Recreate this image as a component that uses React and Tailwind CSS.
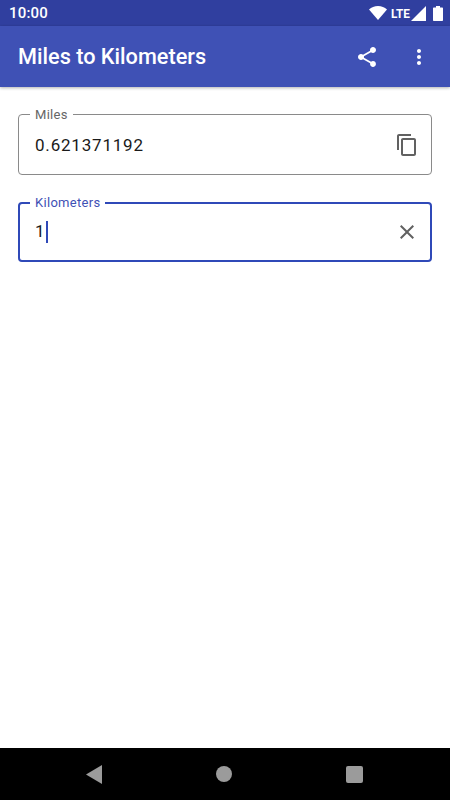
import React from 'react';

function Icon({ d, size = 24, className = '' }) {
  return (
    <svg width={size} height={size} viewBox="0 0 24 24" fill="currentColor" className={className}>
      <path d={d} />
    </svg>
  );
}

const SHARE = 'M18 16.08c-.76 0-1.44.3-1.96.77L8.91 12.7c.05-.23.09-.46.09-.7s-.04-.47-.09-.7l7.05-4.11c.54.5 1.25.81 2.04.81 1.66 0 3-1.34 3-3s-1.34-3-3-3-3 1.34-3 3c0 .24.04.47.09.7L8.04 9.81C7.5 9.31 6.79 9 6 9c-1.66 0-3 1.34-3 3s1.34 3 3 3c.79 0 1.5-.31 2.04-.81l7.12 4.16c-.05.21-.08.43-.08.65 0 1.61 1.31 2.92 2.92 2.92 1.61 0 2.92-1.31 2.92-2.92s-1.31-2.92-2.92-2.92z';
const MORE = 'M12 8c1.1 0 2-.9 2-2s-.9-2-2-2-2 .9-2 2 .9 2 2 2zm0 2c-1.1 0-2 .9-2 2s.9 2 2 2 2-.9 2-2-.9-2-2-2zm0 6c-1.1 0-2 .9-2 2s.9 2 2 2 2-.9 2-2-.9-2-2-2z';
const COPY = 'M16 1H4c-1.1 0-2 .9-2 2v14h2V3h12V1zm3 4H8c-1.1 0-2 .9-2 2v14c0 1.1.9 2 2 2h11c1.1 0 2-.9 2-2V7c0-1.1-.9-2-2-2zm0 16H8V7h11v14z';
const CLOSE = 'M19 6.41L17.59 5 12 10.59 6.41 5 5 6.41 10.59 12 5 17.59 6.41 19 12 13.41 17.59 19 19 17.59 13.41 12 19 6.41z';

function StatusBar() {
  return (
    <div className="h-[26px] bg-[#303f9f] flex items-center justify-between pl-[9px] pr-[7px] text-white">
      <span className="text-[15px] font-medium tracking-[0.2px]">10:00</span>
      <div className="flex items-center">
        <svg width="18" height="14" viewBox="0 0 18 14" fill="currentColor">
          <path d="M9 14L0 3.6C2.4 1.400 5.500 0 9 0s6.600 1.400 9 3.600L9 14z" />
        </svg>
        <span className="ml-[3px] text-[13px] font-bold leading-none scale-x-[0.9]">LTE</span>
        <svg width="15" height="15" viewBox="0 0 15 15" fill="currentColor">
          <path d="M15 0v15H0L15 0z" />
        </svg>
        <svg width="10" height="15" viewBox="0 0 10 15" fill="currentColor" className="ml-[7px]">
          <path d="M3 0h4v1.500h2c.6 0 1 .4 1 1V14c0 .6-.4 1-1 1H1c-.6 0-1-.4-1-1V2.500c0-.6.4-1 1-1h2V0z" />
        </svg>
      </div>
    </div>
  );
}

function Toolbar() {
  return (
    <div className="h-[61px] bg-[#3f51b5] flex items-center pl-[18px] text-white shadow-[0_1px_3px_rgba(0,0,0,0.3)]">
      <h1 className="flex-1 text-[21.7px] font-medium pt-[1px]">Miles to Kilometers</h1>
      <Icon d={SHARE} className="mr-[28px]" />
      <Icon d={MORE} className="mr-[19px]" />
    </div>
  );
}

function Field({ label, active, icon, children }) {
  return (
    <fieldset
      className={
        active
          ? 'h-[66px] rounded-[4px] border-2 border-[#2f49b8] px-[15px]'
          : 'h-[67px] rounded-[4px] border border-[#8a8a8a] px-[16px]'
      }
    >
      <legend
        className={
          active
            ? 'ml-[-5px] px-[5px] text-[13px] leading-[13px] tracking-[0.3px] text-[#3f51b5]'
            : 'ml-[-5px] px-[5px] text-[13px] leading-[13px] tracking-[0.3px] text-[#666666]'
        }
      >
        {label}
      </legend>
      <div className={active ? 'flex items-center justify-between h-[46px]' : 'flex items-center justify-between h-[48px]'}>
        <div className={active ? 'flex items-center text-[17px] tracking-[0.8px] text-[#1a1a1a]' : 'flex items-center pt-[2px] text-[17px] tracking-[0.8px] text-[#1a1a1a]'}>
          {children}
        </div>
        <Icon d={icon} className="text-[#616161] mr-[-4px]" />
      </div>
    </fieldset>
  );
}

function NavBar() {
  return (
    <div className="h-[52px] bg-black flex items-center justify-between pl-[86px] pr-[87px] text-[#9b9b9b]">
      <svg width="16" height="19" viewBox="0 0 16 19" fill="currentColor">
        <path d="M16 0v19L0 9.500z" />
      </svg>
      <div className="w-4 h-4 rounded-full bg-[#9b9b9b]" />
      <div className="w-[17px] h-[17px] rounded-[2px] bg-[#9b9b9b]" />
    </div>
  );
}

export default function App() {
  return (
    <div className="h-[800px] w-[450px] flex flex-col bg-white font-['Roboto',sans-serif] overflow-hidden">
      <StatusBar />
      <Toolbar />
      <div className="flex-1 flex flex-col gap-[21px] px-[18px] pt-[21px]">
        <Field label="Miles" icon={COPY}>0.621371192</Field>
        <Field label="Kilometers" icon={CLOSE} active>
          1<span className="ml-[1px] w-[2px] h-[22px] bg-[#2f49b8]" />
        </Field>
      </div>
      <NavBar />
    </div>
  );
}
